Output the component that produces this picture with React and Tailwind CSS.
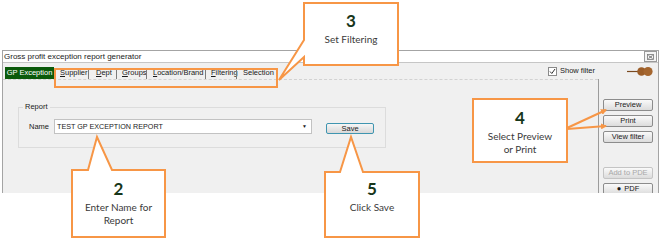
import React from 'react';

const TABS = [
  { lead: 'S', rest: 'upplier', w: 'w-[34px]', pl: 'pl-[6px]' },
  { lead: 'D', rest: 'ept', w: 'w-[27px]', pl: 'pl-[7px]' },
  { lead: 'G', rest: 'roups', w: 'w-[29px]', pl: 'pl-[5px]' },
  { lead: 'L', rest: 'ocation/Brand', w: 'w-[58px]', pl: 'pl-[6px]' },
  { lead: 'F', rest: 'iltering', w: 'w-[30px]', pl: 'pl-[5px]' },
  { lead: '', rest: 'Selection', w: 'w-[40px]', pl: 'pl-[6px]' },
];

function WinButton({ children, disabled, className = '' }) {
  return (
    <div
      className={
        'w-[50px] h-[12px] rounded-[2px] border flex items-center justify-center text-[7.5px] leading-none bg-gradient-to-b from-[#fafafa] to-[#dcdcdc] ' +
        (disabled ? 'border-[#c4c4c4] text-[#a8a8a8] ' : 'border-[#8c8c8c] text-[#1a1a1a] ') +
        className
      }
    >
      {children}
    </div>
  );
}

function Callout({ box, num, lines, pt }) {
  return (
    <div className={'absolute flex flex-col items-center font-["Lato",sans-serif] ' + box + ' ' + pt}>
      <div className="text-[17px] leading-[20px] font-bold text-[#17361a]">{num}</div>
      <div className="mt-[2px] text-[10px] leading-[13px] text-[#3a3a3a] text-center">
        {lines.map((l) => (
          <div key={l}>{l}</div>
        ))}
      </div>
    </div>
  );
}

export default function App() {
  return (
    <div className="relative w-[660px] h-[240px] bg-white overflow-hidden font-['Liberation_Sans',sans-serif] text-[#1a1a1a]">
      <div className="h-[50px]" />

      {/* Window */}
      <div className="ml-[2px] w-[657px] h-[143px] border-t border-l border-r border-[#a4a4a4] flex flex-col overflow-hidden">
        <div className="h-[16px] bg-white flex items-center pl-[1px] pr-[1px]">
          <span className="text-[8px] leading-none">Gross profit exception report generator</span>
          <div className="ml-auto w-[13px] h-[11px] border border-[#9a9a9a] bg-[#f4f4f4] flex items-center justify-center">
            <svg width="7" height="6" viewBox="0 0 7 6">
              <rect x="0.5" y="0.5" width="6" height="5" fill="none" stroke="#777" strokeWidth="0.8" />
              <path d="M1.5 1.5 L5.5 4.5 M5.5 1.5 L1.5 4.5" stroke="#555" strokeWidth="0.8" />
            </svg>
          </div>
        </div>

        <div className="flex-1 flex flex-col bg-[#f0f0f0] border-t border-[#c6c6c6]">
          {/* tab row */}
          <div className="h-[16px] flex items-end pl-[2px] pr-[5px]">
            <div className="w-[49px] h-[12px] bg-[#0b5a0b] text-white text-[7.5px] leading-none flex items-center justify-center">
              GP Exception
            </div>
            {TABS.map((t, i) => (
              <React.Fragment key={t.rest}>
                <div className={'h-[12px] flex items-center text-[7.5px] leading-none ' + t.w + ' ' + t.pl}>
                  {t.lead && <u>{t.lead}</u>}
                  {t.rest}
                </div>
                {i < TABS.length - 1 && <div className="w-px h-[11px] bg-[#7c7c7c]" />}
              </React.Fragment>
            ))}
            <div className="ml-auto self-center flex items-center">
              <div className="w-[9px] h-[9px] border border-[#8a8a8a] bg-white flex items-center justify-center">
                <svg width="7" height="7" viewBox="0 0 7 7">
                  <path d="M1 3.5 L2.8 5.5 L6 1" fill="none" stroke="#333" strokeWidth="1" />
                </svg>
              </div>
              <span className="ml-[3px] w-[67px] text-[7.5px] leading-none">Show filter</span>
              <svg width="26" height="11" viewBox="0 0 26 11">
                <line x1="0" y1="5.5" x2="11" y2="5.5" stroke="#7a4a20" strokeWidth="1.2" />
                <circle cx="14.5" cy="5.5" r="4.3" fill="#9c5e29" />
                <circle cx="21" cy="5.5" r="4.6" fill="#a5662f" />
              </svg>
            </div>
          </div>

          <div className="flex-1 flex">
            {/* main */}
            <div className="flex-1 border-t border-dashed border-[#d2d2d2]">
              <fieldset className="ml-[15px] mt-[22px] w-[368px] h-[46px] border border-[#dcdcdc]">
                <legend className="ml-[4px] px-[2px] text-[7.5px] leading-[10px]">Report</legend>
                <div className="mt-[7px] flex items-end">
                  <span className="ml-[10px] mb-[4px] text-[7.5px] leading-none">Name</span>
                  <div className="ml-[5px] w-[258px] h-[15px] bg-white border border-[#c2c2c2] flex items-center pl-[2px] pr-[4px]">
                    <span className="text-[7.2px] leading-none">TEST GP EXCEPTION REPORT</span>
                    <span className="ml-auto text-[5px] leading-none text-[#222]">▼</span>
                  </div>
                  <div className="ml-[14px] w-[48px] h-[11px] rounded-[2px] border border-[#3f95b0] bg-gradient-to-b from-[#f6f6f6] to-[#d8d8d8] flex items-center justify-center text-[7.5px] leading-none">
                    Save
                  </div>
                </div>
              </fieldset>
            </div>

            {/* right panel */}
            <div className="w-[60px] border-l border-[#9c9c9c] pl-[4px] pt-[20px] flex flex-col gap-[4px]">
              <WinButton>Preview</WinButton>
              <WinButton>Print</WinButton>
              <WinButton>View filter</WinButton>
              <WinButton disabled className="mt-[20px]">Add to PDE</WinButton>
              <WinButton>
                <span className="mr-[3px]">●</span>PDF
              </WinButton>
            </div>
          </div>
        </div>
      </div>

      {/* callout shapes */}
      <svg className="absolute inset-0 pointer-events-none" width="660" height="240" viewBox="0 0 660 240">
        <defs>
          <marker id="ah" markerWidth="6" markerHeight="6" refX="5" refY="3" orient="auto" markerUnits="userSpaceOnUse">
            <path d="M0 0 L6 3 L0 6 Z" fill="#f79646" />
          </marker>
        </defs>
        <g fill="#fff" stroke="#f79646" strokeWidth="2" strokeLinejoin="miter">
          <rect x="55" y="69" width="222" height="18" fill="none" />
          <polygon points="304,3 398,3 398,65 304,65 304,57 279,80 304,40" />
          <polygon points="72,170 88,170 97,137 112,170 165,170 165,237 72,237" />
          <polygon points="325,172 340,172 351,137 363,172 419,172 419,237 325,237" />
          <rect x="473" y="99" width="94" height="63" />
        </g>
        <line x1="567" y1="128" x2="606" y2="110" stroke="#f79646" strokeWidth="2" markerEnd="url(#ah)" />
        <line x1="567" y1="129" x2="606" y2="126" stroke="#f79646" strokeWidth="2" markerEnd="url(#ah)" />
      </svg>

      <Callout box="left-[304px] top-[3px] w-[94px] h-[62px]" pt="pt-[8px]" num="3" lines={['Set Filtering']} />
      <Callout box="left-[72px] top-[170px] w-[93px] h-[67px]" pt="pt-[9px]" num="2" lines={['Enter Name for', 'Report']} />
      <Callout box="left-[325px] top-[172px] w-[94px] h-[65px]" pt="pt-[7px]" num="5" lines={['Click Save']} />
      <Callout box="left-[473px] top-[99px] w-[94px] h-[63px]" pt="pt-[9px]" num="4" lines={['Select Preview', 'or Print']} />
    </div>
  );
}
